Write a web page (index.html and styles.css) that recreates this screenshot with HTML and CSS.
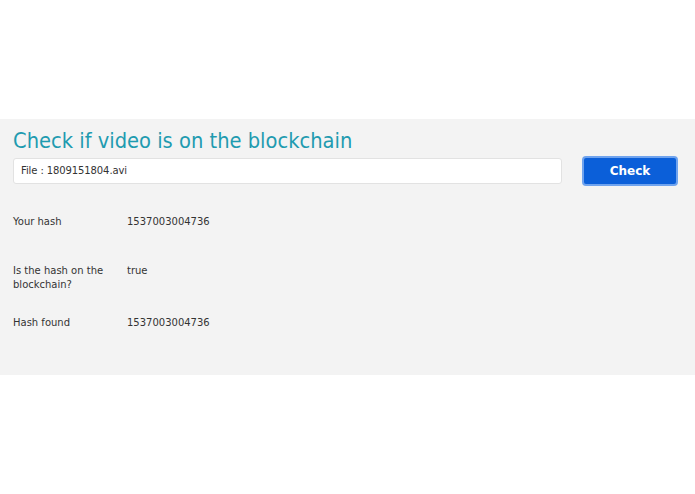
FILE: index.html
```html
<!DOCTYPE html>
<html>
<head>
<meta charset="utf-8">
<link rel="stylesheet" href="styles.css">
</head>
<body>
<div class="top"></div>
<section class="panel">
  <h1 class="title">Check if video is on the blockchain</h1>
  <div class="form">
    <div class="input">File : 1809151804.avi</div>
    <button class="btn">Check</button>
  </div>
  <div class="rows">
    <div class="row r1"><div class="label">Your hash</div><div class="value">1537003004736</div></div>
    <div class="row r2"><div class="label">Is the hash on the blockchain?</div><div class="value">true</div></div>
    <div class="row r3"><div class="label">Hash found</div><div class="value">1537003004736</div></div>
  </div>
</section>
</body>
</html>
```
FILE: styles.css
```css
html, body { margin: 0; padding: 0; background: #fff; }
body { font-family: "DejaVu Sans", Verdana, sans-serif; color: #333; width: 695px; height: 494px; overflow: hidden; }
.top { height: 119px; }
.panel { background: #f3f3f3; height: 256px; padding: 8px 13px 0 13px; box-sizing: border-box; }
.title { margin: 0; font-family: "DejaVu Sans Condensed", "DejaVu Sans", sans-serif; font-weight: normal; font-size: 21.7px; line-height: 28px; color: #1f9bb0; }
.form { display: flex; align-items: center; margin-top: 1px; }
.input { width: 549px; height: 26px; box-sizing: border-box; background: #fff; border: 1px solid #e2e2e2; border-radius: 3px; font-size: 10px; line-height: 24px; padding-left: 7px; letter-spacing: -0.1px; color: #333; }
.btn { margin-left: 20px; width: 96px; height: 30px; background: #0b5fd9; border: 2px solid #6fa3ee; border-radius: 4px; color: #fff; font-family: "DejaVu Sans", Verdana, sans-serif; font-weight: bold; font-size: 12px; padding: 0; }
.rows { margin-top: 29px; }
.row { display: flex; font-size: 10px; line-height: 14px; }
.label { width: 114px; padding-right: 10px; box-sizing: border-box; }
.r2 { margin-top: 35px; }
.r3 { margin-top: 24px; }
```
